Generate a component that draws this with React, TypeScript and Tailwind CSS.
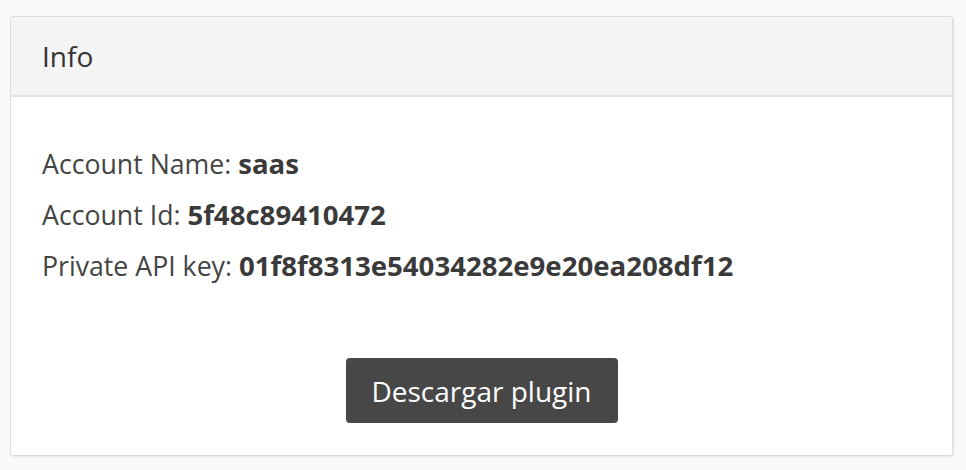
import React from "react";

export default function App() {
  return (
    <div className="w-[966px] h-[470px] bg-[#faf9f8] pt-[16px] pl-[10px]" style={{ fontFamily: '"Open Sans", sans-serif' }}>
      <div className="w-[943px] h-[440px] bg-white border border-[#dcdcdc] rounded-[3px] shadow-[1px_1px_2px_rgba(0,0,0,0.08)] flex flex-col">
        <div className="h-[80px] bg-[#f4f4f4] border-b-2 border-[#e2e2e2] flex items-center pl-[31px] text-[28px] text-[#333]">
          Info
        </div>
        <div className="flex-1 flex flex-col px-[31px] pt-[41px] text-[26.7px] text-[#444] leading-[50px]">
          <div>Account Name: <b className="font-bold text-[27.6px] text-[#3a3a3a]">saas</b></div>
          <div>Account Id: <b className="font-bold text-[27.6px] text-[#3a3a3a]">5f48c89410472</b></div>
          <div>Private API key: <b className="font-bold text-[27.6px] text-[#3a3a3a]">01f8f8313e54034282e9e20ea208df12</b></div>
          <div className="flex justify-center mt-[67px]">
            <button className="w-[272px] h-[65px] bg-[#474747] text-white rounded-[4px] text-[28px]">Descargar plugin</button>
          </div>
        </div>
      </div>
    </div>
  );
}
